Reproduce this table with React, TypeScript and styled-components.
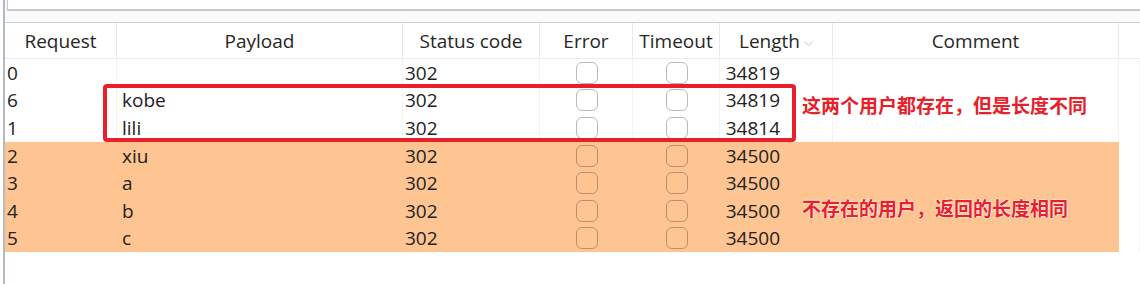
import React from "react";
import styled, { createGlobalStyle } from "styled-components";

type Row = {
  id: string;
  payload: string;
  status: string;
  length: string;
  hl?: boolean;
};

const rows: Row[] = [
  { id: "0", payload: "", status: "302", length: "34819" },
  { id: "6", payload: "kobe", status: "302", length: "34819" },
  { id: "1", payload: "lili", status: "302", length: "34814" },
  { id: "2", payload: "xiu", status: "302", length: "34500", hl: true },
  { id: "3", payload: "a", status: "302", length: "34500", hl: true },
  { id: "4", payload: "b", status: "302", length: "34500", hl: true },
  { id: "5", payload: "c", status: "302", length: "34500", hl: true },
];

const COLS = "112px 286px 137px 93px 87px 113px 286px 1fr";

const GlobalStyle = createGlobalStyle`
  html, body {
    margin: 0;
    padding: 0;
    background: #fff;
  }
  body {
    font-family: "Open Sans", "Noto Sans", "Noto Sans CJK SC", sans-serif;
    color: #222;
  }
`;

function App() {
  return (
    <>
      <GlobalStyle />
      <Page>
        <Window>
          <SearchStrip>
            <SearchBox />
          </SearchStrip>
          <Table>
            <HeaderRow>
              <HeadCell>Request</HeadCell>
              <HeadCell>Payload</HeadCell>
              <HeadCell>Status code</HeadCell>
              <HeadCell>Error</HeadCell>
              <HeadCell>Timeout</HeadCell>
              <HeadCell>
                Length<SortMark>⌵</SortMark>
              </HeadCell>
              <HeadCell>Comment</HeadCell>
              <HeadCell $last />
            </HeaderRow>
            <Body>
              {rows.map((r) => (
                <DataRow key={r.id}>
                  <Cell $hl={r.hl}>{r.id}</Cell>
                  <Cell $hl={r.hl} $pad={5}>
                    {r.payload}
                  </Cell>
                  <Cell $hl={r.hl}>{r.status}</Cell>
                  <Cell $hl={r.hl} $center>
                    <Check />
                  </Cell>
                  <Cell $hl={r.hl} $center>
                    <Check />
                  </Cell>
                  <Cell $hl={r.hl} $right>
                    {r.length}
                  </Cell>
                  <Cell $hl={r.hl} />
                  <Cell />
                </DataRow>
              ))}
              <Marker />
              <Note $top={34}>这两个用户都存在，但是长度不同</Note>
              <Note $top={137}>不存在的用户，返回的长度相同</Note>
            </Body>
          </Table>
        </Window>
      </Page>
    </>
  );
}

const Page = styled.div`
  height: 284px;
  padding-left: 3px;
  display: flex;
  overflow: hidden;
`;

const Window = styled.div`
  flex: 1;
  display: flex;
  flex-direction: column;
  border-left: 2px solid #b3bac4;
  background: #fdfdfd;
`;

const SearchStrip = styled.div`
  height: 22px;
  padding-left: 2px;
  box-sizing: border-box;
  background: #fafafa;
`;

const SearchBox = styled.div`
  height: 11px;
  box-sizing: border-box;
  border: 1px solid #c6c6c6;
  border-top: none;
  border-right: none;
  border-bottom: 2px solid #c9c9c9;
  background: #fff;
`;

const Table = styled.div`
  flex: 1;
  display: flex;
  flex-direction: column;
  border-top: 1px solid #c4d3e3;
  background: #fff;
`;

const HeaderRow = styled.div`
  display: grid;
  grid-template-columns: ${COLS};
  height: 35px;
  border-bottom: 1px solid #ececec;
`;

const HeadCell = styled.div<{ $last?: boolean }>`
  display: flex;
  align-items: center;
  justify-content: center;
  font-size: 19px;
  color: #262626;
  border-right: ${(p) => (p.$last ? "none" : "1px solid #e9e9e9")};
  white-space: nowrap;
`;

const SortMark = styled.span`
  font-size: 12px;
  color: #b8b8b8;
  margin-left: 4px;
  margin-top: 2px;
`;

const Body = styled.div`
  position: relative;
  display: flex;
  flex-direction: column;
`;

const DataRow = styled.div`
  display: grid;
  grid-template-columns: ${COLS};
  height: 27.6px;
`;

const Cell = styled.div<{
  $hl?: boolean;
  $center?: boolean;
  $right?: boolean;
  $pad?: number;
}>`
  display: flex;
  align-items: center;
  justify-content: ${(p) =>
    p.$center ? "center" : p.$right ? "flex-end" : "flex-start"};
  padding-left: ${(p) => (p.$pad ? p.$pad : 2)}px;
  padding-right: ${(p) => (p.$right ? 52 : 0)}px;
  font-size: 19px;
  color: #222;
  background: ${(p) => (p.$hl ? "#fec593" : "transparent")};
  border-right: 1px solid ${(p) => (p.$hl ? "#fec593" : "#f3f3f3")};
  white-space: nowrap;
  overflow: hidden;
`;

const Check = styled.div`
  width: 22px;
  height: 22px;
  box-sizing: border-box;
  border: 1.5px solid rgba(0, 0, 0, 0.27);
  border-radius: 6px;
`;

const Marker = styled.div`
  position: absolute;
  left: 98px;
  top: 25px;
  width: 693px;
  height: 58px;
  box-sizing: border-box;
  border: 4px solid #e91f2b;
  border-radius: 4px;
  pointer-events: none;
`;

const Note = styled.div<{ $top: number }>`
  position: absolute;
  left: 797px;
  top: ${(p) => p.$top}px;
  font-family: "Noto Sans CJK SC", sans-serif;
  font-weight: 700;
  font-size: 19px;
  line-height: 24px;
  color: #e8202a;
  text-shadow: 0 0 2px #fff, 0 0 1px #fff, 0 0 1px #fff;
  white-space: nowrap;
`;

export default App;
